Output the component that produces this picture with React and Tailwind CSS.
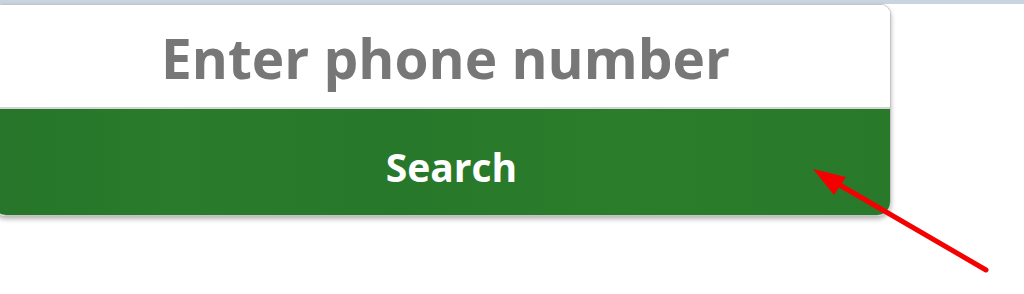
export default function App() {
  return (
    <div
      className="relative h-[294px] w-[1024px] overflow-hidden bg-white"
      style={{ fontFamily: '"Open Sans", "Noto Sans", sans-serif' }}
    >
      <div className="h-[4px] w-full bg-[#c9d4e1]" />
      <div className="ml-[-8px] w-[899px] overflow-hidden rounded-b-[14px] rounded-t-[10px] border border-[#c4c4c4] shadow-[0_3px_5px_rgba(0,0,0,0.3)]">
        <div className="flex h-[102px] items-center justify-center bg-white pl-[8px] pt-[4px]">
          <input
            type="text"
            placeholder="Enter phone number"
            className="w-full bg-transparent text-center text-[55px] font-bold text-[#777] outline-none placeholder:text-[#777]"
          />
        </div>
        <div className="h-[2px] bg-[#d4d4d4]" />
        <button
          type="button"
          className="flex h-[106px] w-full items-center justify-center bg-[linear-gradient(90deg,#26752a_0%,#2a7b2b_20%,#27782a_45%,#2b7d2b_70%,#28792a_100%)] pl-[20px] pt-[10px] text-[39px] font-bold text-white"
        >
          Search
        </button>
      </div>
      <svg
        className="absolute left-0 top-0"
        width="1024"
        height="294"
        viewBox="0 0 1024 294"
      >
        <line
          x1="986"
          y1="270"
          x2="838"
          y2="184"
          stroke="#f50000"
          strokeWidth="5"
          strokeLinecap="round"
        />
        <polygon points="813,169 846,177 834,195" fill="#f50000" />
      </svg>
    </div>
  );
}
